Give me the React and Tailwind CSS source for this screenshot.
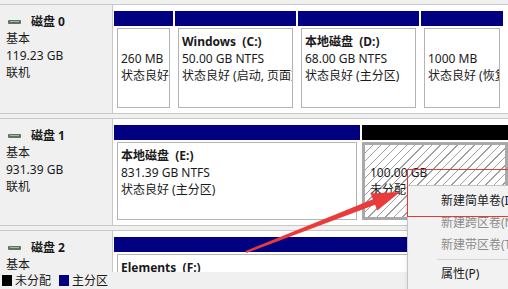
import React from "react";

const font = { fontFamily: '"Noto Sans", "Noto Sans CJK SC", sans-serif' };

const DiskIcon = () => (
    <div className="w-[13px] h-[4px] bg-[#6b6b6b] rounded-[1px] flex items-center px-[2px]">
        <div className="w-full h-[1px] bg-[#7fd07f]" />
    </div>
);

const DiskLabel = ({ name, size }) => (
    <div className="w-[113px] shrink-0 bg-[#f0f0f0] border-r border-[#c8c8c8] pl-[6px] pt-[8px] text-[12px] leading-[17px] text-[#1a1a1a]">
        <div className="flex items-center gap-[10px] pl-[2px]">
            <DiskIcon />
            <span className="font-bold">{name}</span>
        </div>
        <div>基本</div>
        {size && <div>{size}</div>}
        {size && <div>联机</div>}
    </div>
);

const Partition = ({ width, title, lines, bar = "bg-[#000080]", hatched = false }) => (
    <div className={`flex flex-col ${width || "flex-1"} min-w-0`}>
        <div className={`h-[15px] ${bar}`} />
        <div
            className={`flex-1 mt-[2px] overflow-hidden whitespace-nowrap text-[12px] leading-[17px] text-[#1a1a1a] ${
                hatched
                    ? "border-[3px] border-[#a9a9a9] pl-[5px] pt-[2px] bg-[repeating-linear-gradient(135deg,#ffffff_0px,#ffffff_5px,#a0a0a0_5px,#a0a0a0_6px)]"
                    : "mx-[3px] border border-[#b4b4b4] bg-white pl-[3px] pt-[4px]"
            }`}
        >
            <div className="font-bold h-[17px]">{title}</div>
            {lines.map((l) => (
                <div key={l}>{l}</div>
            ))}
        </div>
    </div>
);

const DiskRow = ({ name, size, height, children }) => (
    <div className={`flex ${height} border-y border-[#c8c8c8] shrink-0`}>
        <DiskLabel name={name} size={size} />
        <div className="flex-1 bg-white flex gap-[2px] pl-[1px] pt-[6px] pb-[5px] min-w-0">{children}</div>
    </div>
);

export default function App() {
    return (
        <div className="w-[508px] h-[289px] relative overflow-hidden bg-[#f0f0f0] flex flex-col" style={font}>
            <div className="flex-1 overflow-hidden flex flex-col pt-[4px] gap-[4px]">
                <DiskRow name="磁盘 0" size="119.23 GB" height="h-[110px]">
                    <Partition width="w-[59px]" title="" lines={["260 MB", "状态良好"]} />
                    <Partition width="w-[121px]" title={"Windows\u00a0 (C:)"} lines={["50.00 GB NTFS", "状态良好 (启动, 页面文件, 故障转储)"]} />
                    <Partition width="w-[121px]" title={"本地磁盘\u00a0 (D:)"} lines={["68.00 GB NTFS", "状态良好 (主分区)"]} />
                    <Partition width="w-[82px]" title="" lines={["1000 MB", "状态良好 (恢复分区)"]} />
                </DiskRow>
                <DiskRow name="磁盘 1" size="931.39 GB" height="h-[108px]">
                    <Partition width="w-[246px]" title={"本地磁盘\u00a0 (E:)"} lines={["831.39 GB NTFS", "状态良好 (主分区)"]} />
                    <Partition bar="bg-black" hatched title="" lines={["100.00 GB", "未分配"]} />
                </DiskRow>
                <DiskRow name="磁盘 2" height="h-[108px]">
                    <Partition title={"Elements\u00a0 (F:)"} lines={["1863.00 GB NTFS"]} />
                </DiskRow>
            </div>

            <div className="h-[17px] shrink-0 bg-[#f0f0f0] flex items-center gap-[3px] pl-[2px] text-[12px] text-[#1a1a1a]">
                <span className="w-[10px] h-[11px] bg-black" />
                <span>未分配</span>
                <span className="w-[10px] h-[11px] bg-[#000080] ml-[5px]" />
                <span>主分区</span>
            </div>

            {/* context menu */}
            <div className="absolute left-[407px] top-[185px] w-[112px] h-[112px] bg-[#f2f2f2] border border-[#c4c4c4] shadow-md pt-[4px] text-[12px] whitespace-nowrap">
                <div className="h-[22px] leading-[22px] pl-[33px] text-[#1a1a1a]">新建简单卷(I)</div>
                <div className="h-[22px] leading-[22px] pl-[33px] text-[#8c8c8c]">新建跨区卷(N)</div>
                <div className="h-[22px] leading-[22px] pl-[33px] text-[#8c8c8c]">新建带区卷(T)</div>
                <div className="h-[1px] bg-[#d4d4d4] ml-[29px] my-[3px]" />
                <div className="h-[22px] leading-[22px] pl-[33px] text-[#1a1a1a]">属性(P)</div>
            </div>

            {/* highlight box */}
            <div className="absolute left-[407px] top-[169px] w-[110px] h-[48px] border border-[#e03a3a]" />

            {/* arrow */}
            <svg className="absolute left-0 top-0 pointer-events-none" width="508" height="289">
                <polygon
                    points="245.5,251.1 372.9,199.2 370.7,193.6 400,192 377.3,210.4 375.1,204.8 246.5,252.9"
                    fill="#ea3b3b"
                />
            </svg>
        </div>
    );
}
